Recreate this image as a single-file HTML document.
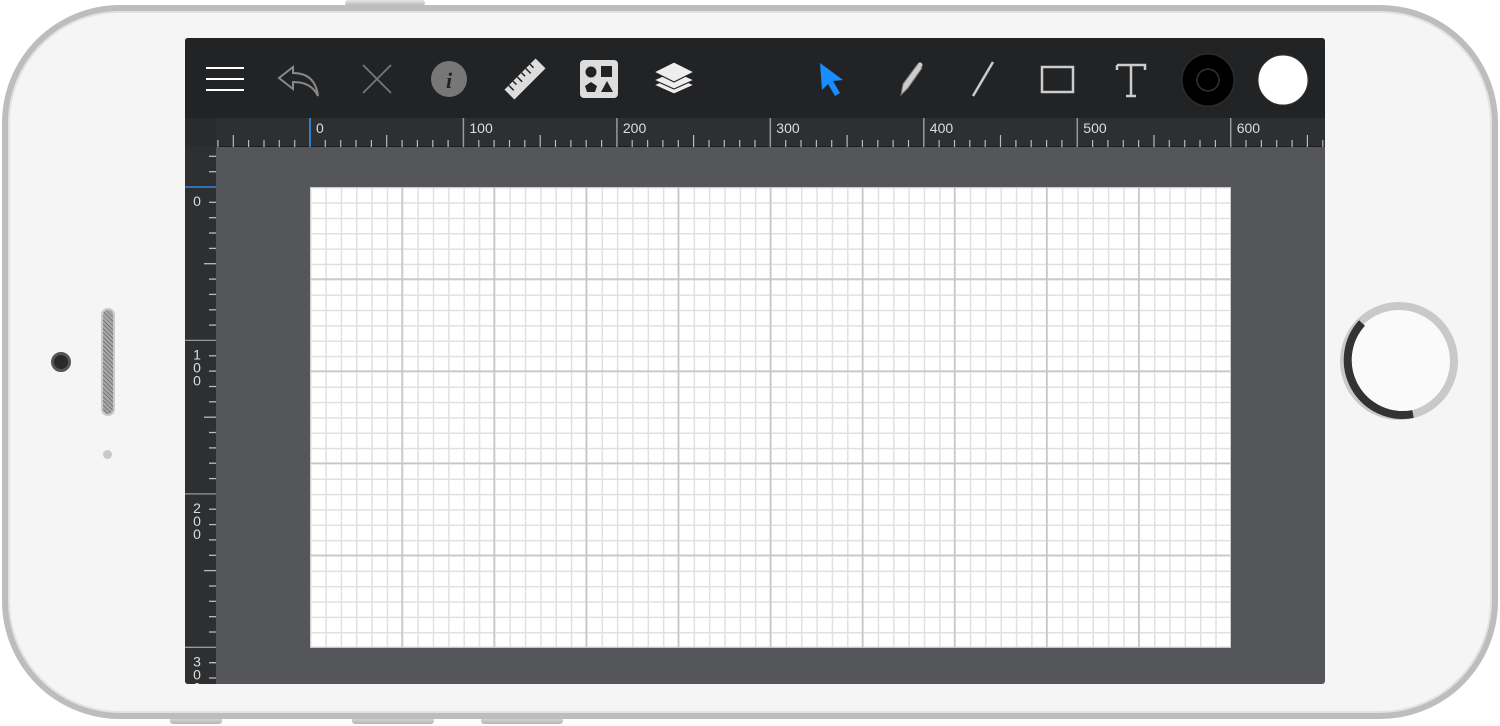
<!DOCTYPE html>
<html><head><meta charset="utf-8"><style>
*{margin:0;padding:0;box-sizing:border-box}
body{width:1500px;height:726px;background:#fff;position:relative;overflow:hidden;font-family:"Liberation Sans",sans-serif}
.btn{position:absolute;background:linear-gradient(#e6e6e6,#b5b5b5);border-radius:3px}
.phone{position:absolute;left:2px;top:5px;width:1496px;height:714px;border-radius:118px;background:#bdbdbd;}
.phone .in{position:absolute;left:6px;top:6px;right:6px;bottom:6px;border-radius:112px;background:#f5f5f5;border:2px solid #e2e2e2}
.screen{position:absolute;left:185px;top:38px;width:1140px;height:646px;background:#55565a;border-radius:3px;overflow:hidden}
.tb{position:absolute;left:0;top:0;width:1140px;height:80px;background:#222325}
.hr{position:absolute;left:0;top:80px;width:1140px;height:29px;background:#2e2f31;border-bottom:1px solid #1c1c1d}
.vr{position:absolute;left:0;top:80px;width:31px;height:566px;background:#2e2f31}
.paper{position:absolute;left:125px;top:149px;width:921px;height:461px;background:#fff;
background-image:
linear-gradient(90deg,#c6c6c6 1.5px,transparent 1.5px),
linear-gradient(#c6c6c6 1.5px,transparent 1.5px),
linear-gradient(90deg,#e0e0e0 1.5px,transparent 1.5px),
linear-gradient(#e0e0e0 1.5px,transparent 1.5px);
background-size:92.1px 92.1px,92.1px 92.1px,15.35px 15.35px,15.35px 15.35px;
background-position:-0.8px 0,0 -0.8px,0 0,0 0}
</style></head><body>
<div class="btn" style="left:345px;top:0;width:80px;height:6px"></div>
<div class="btn" style="left:170px;top:716px;width:52px;height:8px"></div>
<div class="btn" style="left:352px;top:716px;width:82px;height:8px"></div>
<div class="btn" style="left:481px;top:716px;width:82px;height:8px"></div>
<div class="phone"><div class="in"></div></div>
<div style="position:absolute;left:51px;top:352px;width:20px;height:20px;border-radius:50%;background:#2a2a2e;border:3px solid #555"></div>
<div style="position:absolute;left:101px;top:308px;width:14px;height:108px;border-radius:7px;background:#8f8f8f;border:2px solid #c9c9c9;background-image:repeating-linear-gradient(45deg,#777 0 1px,#aaa 1px 3px)"></div>
<div style="position:absolute;left:103px;top:450px;width:9px;height:9px;border-radius:50%;background:#c8c8c8"></div>
<svg style="position:absolute;left:1330px;top:295px" width="140" height="140">
<circle cx="69" cy="66" r="55" fill="#fafafa" stroke="#c9c9c9" stroke-width="8"/>
<path d="M32 28 A55 55 0 0 0 83 119" fill="none" stroke="#333" stroke-width="8"/>
</svg>
<div class="screen">
<div class="tb">
<svg width="1140" height="80">
<g stroke="#fff" stroke-width="2"><line x1="21" y1="30" x2="59" y2="30"/><line x1="21" y1="41" x2="59" y2="41"/><line x1="21" y1="52" x2="59" y2="52"/></g>
<path d="M108 29 L94 40 L108 51 L108 44 C120 44 128 48 133 58 C131 42 122 35 108 35 Z" fill="none" stroke="#888" stroke-width="2"/>
<g stroke="#777" stroke-width="1.8"><line x1="178" y1="27" x2="206" y2="55"/><line x1="206" y1="27" x2="178" y2="55"/></g>
<circle cx="264" cy="41" r="18" fill="#777"/>
<text x="264" y="50" font-family="Liberation Serif" font-style="italic" font-weight="bold" font-size="22" fill="#222" text-anchor="middle">i</text>
<g transform="translate(340,41) rotate(-45)"><rect x="-22" y="-7" width="44" height="14" fill="#ddd"/>
<g stroke="#222" stroke-width="1.5"><line x1="-16" y1="-7" x2="-16" y2="0"/><line x1="-10" y1="-7" x2="-10" y2="-2"/><line x1="-4" y1="-7" x2="-4" y2="0"/><line x1="2" y1="-7" x2="2" y2="-2"/><line x1="8" y1="-7" x2="8" y2="0"/><line x1="14" y1="-7" x2="14" y2="-2"/></g></g>
<rect x="395" y="22" width="38" height="38" rx="4" fill="#ddd"/>
<circle cx="406" cy="34" r="5.5" fill="#222"/><rect x="416" y="28" width="11" height="11" fill="#222"/>
<polygon points="406,44 412,48 410,54 402,54 400,48" fill="#222"/><polygon points="422,43 428,54 416,54" fill="#222"/>
<g fill="#eee" stroke="#222" stroke-width="1.2"><path d="M489 38 L509 47 L489 56 L469 47Z"/><path d="M489 33 L509 42 L489 51 L469 42Z"/><path d="M489 24 L509 34 L489 44 L469 34Z"/></g>
<path d="M635 25 L658 42 L648 43 L655 55 L650 58 L643 46 L637 52 Z" fill="#1a8cff"/>
<path d="M716 57 L718 46 L732 27 L737 30 L723 50 Z" fill="#ccc" stroke="#777" stroke-width="1"/><circle cx="735" cy="27" r="2.5" fill="#ccc"/>
<line x1="808" y1="24" x2="788" y2="58" stroke="#ccc" stroke-width="2.5"/>
<rect x="857" y="29" width="31" height="25" fill="none" stroke="#ccc" stroke-width="2.5"/>
<path d="M932 27 H960 V32 M932 27 V32 M946 27 V58 M941 58 H951" fill="none" stroke="#ccc" stroke-width="2.5"/>
<circle cx="1023" cy="42" r="26" fill="#000" stroke="#333"/><circle cx="1023" cy="42" r="11" fill="none" stroke="#333" stroke-width="1.5"/>
<circle cx="1098" cy="42" r="25" fill="#fff" stroke="#333"/>
</svg>
</div>
<div class="hr"></div>
<div class="vr"></div>
<svg width="1140" height="646" style="position:absolute;left:0;top:0" id="rul"></svg>
<div class="paper"></div>
</div>
<script>
(function(){
var s='',ox=125,k=1.5345;
for(var u=-70;u<=660;u+=10){var x=ox+u*k;if(x<31)continue;
var h=(u%100==0)?29:(u%50==0)?12:7;var c=u==0?'#2e9bff':(u%100==0?'#999':'#bbb');
s+='<line x1="'+x.toFixed(1)+'" y1="'+(109-h)+'" x2="'+x.toFixed(1)+'" y2="109" stroke="'+c+'" stroke-width="'+(u%100==0?1.5:1.2)+'"/>';
if(u%100==0)s+='<text x="'+(x+6).toFixed(1)+'" y="95" fill="#ddd" font-size="14" font-family="Liberation Sans">'+u+'</text>';}
var oy=149;
for(var u=-30;u<=330;u+=10){var y=oy+u*k;if(y<110)continue;
var w=(u%100==0)?31:(u%50==0)?12:7;var c=u==0?'#2e9bff':(u%100==0?'#999':'#bbb');
s+='<line x1="'+(31-w)+'" y1="'+y.toFixed(1)+'" x2="31" y2="'+y.toFixed(1)+'" stroke="'+c+'" stroke-width="1.3"/>';
if(u%100==0){var t=String(u);for(var i=0;i<t.length;i++)s+='<text x="12" y="'+(y+19+i*13).toFixed(1)+'" fill="#ddd" font-size="14" text-anchor="middle" font-family="Liberation Sans">'+t[i]+'</text>';}}
s='<rect x="0" y="80" width="31" height="29" fill="#2a2b2d"/>'+s;
document.getElementById('rul').innerHTML=s;
})();
</script>
</body></html>
